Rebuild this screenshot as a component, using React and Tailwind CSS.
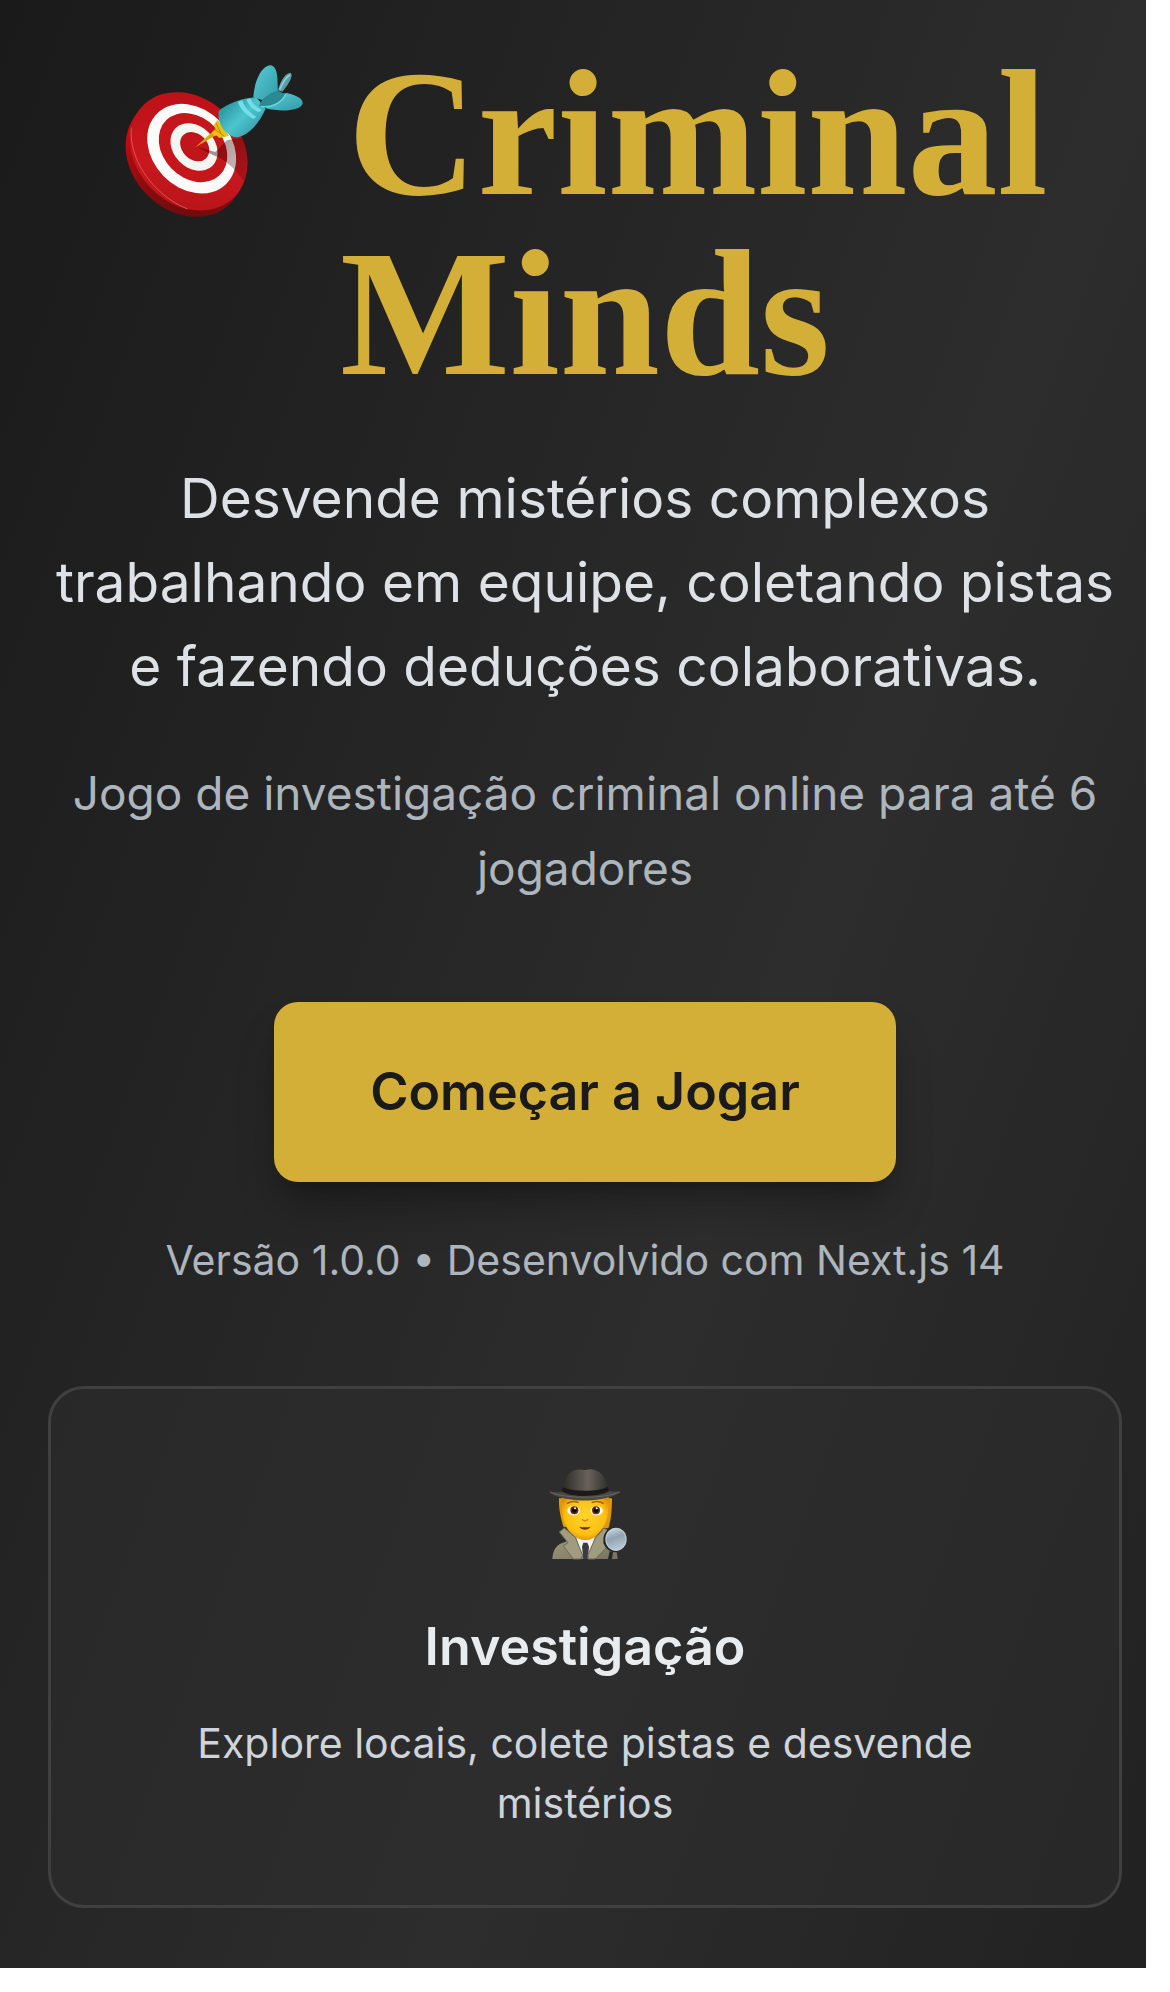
function TargetIcon() {
  const rings = [
    { cx: 274, cy: 325, rx: 148, ry: 118, fill: "#fbfbfa" },
    { cx: 278, cy: 322, rx: 115, ry: 90, fill: "#c4161b" },
    { cx: 281, cy: 320, rx: 79, ry: 62, fill: "#f3f5f1" },
    { cx: 283, cy: 319, rx: 49, ry: 38, fill: "#c0161b" },
  ];
  return (
    <svg viewBox="68 50 540 540" className="-mt-12 -mb-9 inline-block size-[180px] align-middle" role="img" aria-label="Alvo">
      <defs>
        <linearGradient id="rim" x1="0" y1="0" x2="1" y2="1">
          <stop offset="0.1" stopColor="#a00a0d" />
          <stop offset="0.4" stopColor="#c80a10" />
          <stop offset="0.8" stopColor="#7d0b0e" />
          <stop offset="1" stopColor="#4d0a0c" />
        </linearGradient>
        <linearGradient id="face" x1="0" y1="0" x2="1" y2="1">
          <stop offset="0" stopColor="#b80f14" />
          <stop offset="0.6" stopColor="#c8181e" />
          <stop offset="1" stopColor="#b01217" />
        </linearGradient>
        <linearGradient id="dart" x1="370" y1="210" x2="445" y2="285" gradientUnits="userSpaceOnUse">
          <stop offset="0" stopColor="#2f9da6" />
          <stop offset="0.5" stopColor="#4cc5cf" />
          <stop offset="1" stopColor="#3aa3ae" />
        </linearGradient>
        <linearGradient id="fin" x1="0" y1="0" x2="1" y2="1">
          <stop offset="0" stopColor="#5ccbd4" />
          <stop offset="1" stopColor="#2f9ca7" />
        </linearGradient>
        <linearGradient id="shade" x1="290" y1="320" x2="440" y2="390" gradientUnits="userSpaceOnUse">
          <stop offset="0" stopColor="#300" stopOpacity="0.5" />
          <stop offset="1" stopColor="#300" stopOpacity="0.22" />
        </linearGradient>
      </defs>
      <g fill="url(#rim)">
        <ellipse cx="252" cy="352" rx="194" ry="158" transform="rotate(46 252 352)" />
        <ellipse cx="258" cy="343" rx="194" ry="158" transform="rotate(46 258 343)" />
      </g>
      <ellipse cx="265" cy="333" rx="194" ry="158" transform="rotate(46 265 333)" fill="url(#face)" />
      <path d="M93 262 C84 350 152 462 262 506" fill="none" stroke="#ee7a78" strokeWidth="3" opacity="0.6" />
      {rings.map((r) => (
        <ellipse key={r.cx} cx={r.cx} cy={r.cy} rx={r.rx} ry={r.ry} fill={r.fill} transform={`rotate(46 ${r.cx} ${r.cy})`} />
      ))}
      <path d="M290 320 L345 335 L380 300 L425 292 C442 330 446 380 432 425 C410 390 375 358 340 345Z" fill="url(#shade)" />
      <path d="M533 150 C540 120 556 98 570 97 C580 102 570 125 546 154Z" fill="#5d9ea5" />
      <path d="M538 148 C548 125 560 108 569 104" stroke="#83d6dd" strokeWidth="5" fill="none" />
      <path d="M352 238 L340 254 L346 266 L334 276 L337 287 L350 286 L356 293 L372 290 L386 286Z" fill="#e9c013" />
      <path d="M347 248 L362 280 M342 266 L372 288" stroke="#b98d05" strokeWidth="3" />
      <path d="M285 321 L333 277 L344 286Z" fill="#d8aa0a" />
      <path d="M355 212 C380 190 430 172 468 171 L496 205 C478 245 450 282 412 291 C385 290 350 262 355 212Z" fill="url(#dart)" />
      <path d="M412 185 C422 210 440 226 460 236 L468 229 C446 216 432 200 426 180Z M438 178 C446 196 460 210 477 216 L484 208 C466 200 455 188 450 174Z" fill="#70dfe7" />
      <path d="M459 171 C462 125 482 77 510 75 C535 78 531 120 533 152 C515 158 500 170 489 180Z" fill="url(#fin)" />
      <path d="M496 204 C505 185 535 158 560 158 C590 166 608 175 607 190 C600 212 540 215 496 204Z" fill="url(#fin)" />
      <path d="M476 197 C484 170 510 158 534 151 L556 163 C545 187 510 207 476 197Z" fill="#2b8993" />
      <path d="M482 198 C512 204 543 188 556 162" fill="none" stroke="#69d9e1" strokeWidth="4" />
    </svg>
  );
}

function DetectiveIcon() {
  return (
    <svg viewBox="51 45 288 288" className="mt-1 mb-11 size-24" role="img" aria-label="Detetive">
      <defs>
        <radialGradient id="skin" cx="0.5" cy="0.45" r="0.6">
          <stop offset="0" stopColor="#ffd52c" />
          <stop offset="0.7" stopColor="#fcc012" />
          <stop offset="1" stopColor="#dd8d04" />
        </radialGradient>
        <linearGradient id="crown" x1="0" y1="0" x2="1" y2="0">
          <stop offset="0" stopColor="#2e2b28" />
          <stop offset="0.55" stopColor="#68625a" />
          <stop offset="1" stopColor="#302d2a" />
        </linearGradient>
        <linearGradient id="coat" x1="0" y1="0" x2="1" y2="1">
          <stop offset="0" stopColor="#a09a80" />
          <stop offset="1" stopColor="#77725b" />
        </linearGradient>
        <linearGradient id="lens" x1="0" y1="0" x2="0.3" y2="1">
          <stop offset="0" stopColor="#d3dfe6" />
          <stop offset="0.5" stopColor="#8fa3b0" />
          <stop offset="1" stopColor="#b4c6d0" />
        </linearGradient>
      </defs>
      <path d="M117 145 L276 145 C276 185 272 215 265 235 L130 230 C122 200 116 180 117 145Z" fill="#e09a08" />
      <path d="M97 327 C99 300 108 283 136 276 L170 255 L230 255 L262 270 C282 280 292 300 293 327Z" fill="url(#coat)" />
      <path d="M166 252 L226 252 L216 300 L197 327 L180 300Z" fill="#f1f1f3" />
      <path d="M190 278 L202 278 L207 290 L203 327 L190 327 L186 290Z" fill="#393c43" />
      <path d="M126 140 L266 140 C268 190 262 220 240 246 C222 266 212 270 195 270 C178 270 160 260 146 242 C128 218 124 190 126 140Z" fill="url(#skin)" />
      <path d="M118 246 L133 234 L166 262 L188 316 L182 327 L160 327 L130 288 L144 278Z" fill="#a19b80" stroke="#6e6952" strokeWidth="3" />
      <path d="M252 234 L262 240 L250 280 L262 290 L226 327 L204 327 L204 314 L226 264Z" fill="#a19b80" stroke="#6e6952" strokeWidth="3" />
      <g>
        <ellipse cx="161" cy="182" rx="19" ry="14" fill="#fff6df" />
        <ellipse cx="230" cy="182" rx="19" ry="14" fill="#fff6df" />
        <circle cx="163" cy="181" r="12" fill="#5a2c08" />
        <circle cx="228" cy="181" r="12" fill="#5a2c08" />
        <circle cx="163" cy="181" r="7" fill="#120700" />
        <circle cx="228" cy="181" r="7" fill="#120700" />
        <circle cx="165" cy="175" r="3" fill="#fff" />
        <circle cx="230" cy="175" r="3" fill="#fff" />
      </g>
      <path d="M141 161 Q157 150 176 158 M215 158 Q235 150 251 161" fill="none" stroke="#a65d08" strokeWidth="4" />
      <path d="M187 209 Q195 216 203 209" fill="none" stroke="#dc8c08" strokeWidth="5" strokeLinecap="round" />
      <path d="M177 230 Q194 234 212 230 Q206 239 194 239 Q183 238 177 230Z" fill="#6b2d05" />
      <path d="M128 118 C134 85 146 63 166 60 C180 56 188 61 197 60 C207 56 220 57 232 63 C250 72 260 92 266 120 L258 142 L135 142Z" fill="url(#crown)" />
      <path d="M128 112 C160 126 235 126 264 110 L268 130 C240 148 150 148 124 132Z" fill="#1b1a19" />
      <path d="M86 124 C105 128 118 127 128 125 C150 142 240 142 266 124 C280 126 292 125 303 124 C290 138 262 144 240 148 C215 153 170 153 148 148 C120 144 98 138 86 124Z" fill="#4b4743" />
      <path d="M90 126 C130 146 250 148 299 126" fill="none" stroke="#77716a" strokeWidth="2" />
      <path d="M269 304 L279 306 L276 327 L264 327Z" fill="#25272a" />
      <ellipse cx="285" cy="269" rx="35" ry="38" fill="#23272b" />
      <ellipse cx="288" cy="268" rx="32" ry="35" fill="#c3cdd3" />
      <ellipse cx="288" cy="268" rx="29" ry="32" fill="url(#lens)" />
    </svg>
  );
}

export default function App() {
  return (
    <div className="bg-white pr-6 pb-6 font-['Inter',sans-serif]">
      <main className="flex flex-col items-center bg-[linear-gradient(110deg,#1a1a1a_0%,#2d2d2d_62%,#1a1a1a_124%)] pt-11 pr-6 pb-[60px] pl-12 text-center">
        <h1 className="mb-13 font-['Liberation_Serif',serif] text-[180px] leading-[180px] font-bold text-[#d4af37]">
          <TargetIcon /> Criminal Minds
        </h1>
        <p className="mb-12 text-[55px] leading-[84px] text-[#dee2e6]">
          Desvende mistérios complexos trabalhando em equipe, coletando pistas e fazendo deduções colaborativas.
        </p>
        <p className="mb-24 text-[46px] leading-[75px] text-[#adb5bd]">
          Jogo de investigação criminal online para até 6 jogadores
        </p>
        <button
          type="button"
          className="mb-12 rounded-3xl bg-[#d4af37] px-24 py-12 text-[52px] leading-[84px] font-semibold text-[#1a1a1a] shadow-[0_30px_45px_-9px_rgba(0,0,0,0.3),0_12px_18px_-12px_rgba(0,0,0,0.3)]"
        >
          Começar a Jogar
        </button>
        <p className="mb-24 text-[41px] leading-[60px] text-[#adb5bd]">Versão 1.0.0 • Desenvolvido com Next.js 14</p>
        <section className="flex w-full flex-col items-center rounded-[36px] border-3 border-[#404040] bg-[#2d2d2d]/50 p-[72px]">
          <DetectiveIcon />
          <h2 className="mb-6 text-[52px] leading-[84px] font-semibold text-[#e9ecef]">Investigação</h2>
          <p className="text-[41px] leading-[60px] text-[#ced4da]">
            Explore locais, colete pistas e desvende mistérios
          </p>
        </section>
      </main>
    </div>
  );
}
